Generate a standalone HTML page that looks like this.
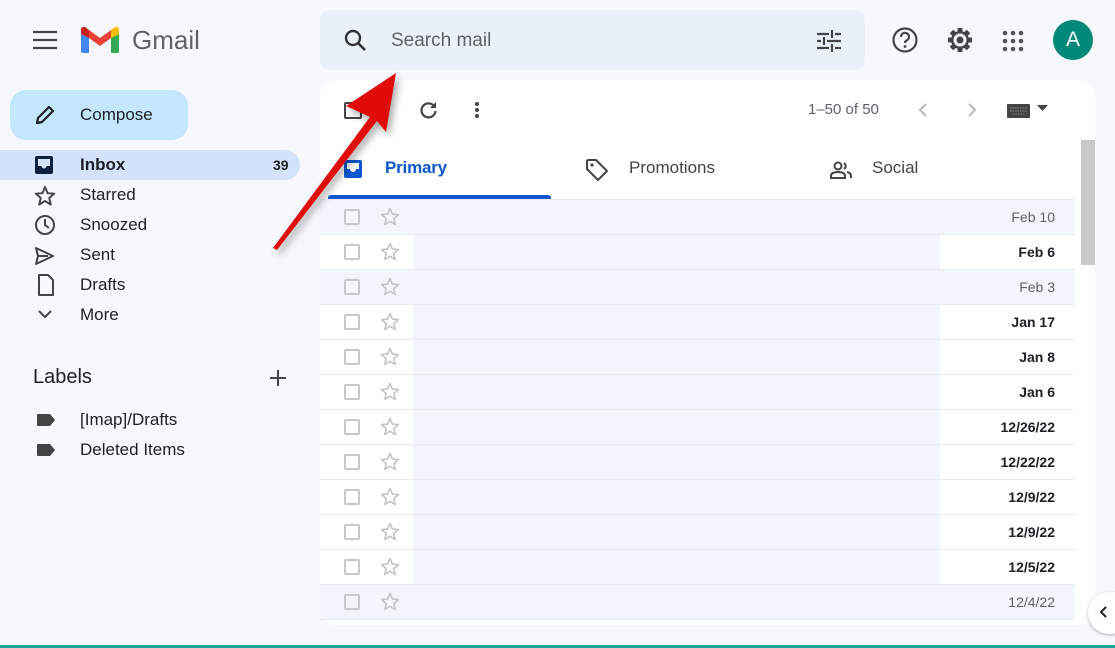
<!DOCTYPE html>
<html><head><meta charset="utf-8"><style>
*{margin:0;padding:0;box-sizing:border-box}
body{width:1115px;height:648px;background:#f6f8fc;font-family:"Liberation Sans",Arial,sans-serif;position:relative;overflow:hidden;color:#202124}
.a{position:absolute}
.nav{position:absolute;left:80px;font-size:17px;color:#202124}
.ic{position:absolute;left:34px}
.row{position:absolute;left:320px;width:755px;height:35px;border-bottom:1px solid #e8ebf0;background:#f2f6fc}
.row .l,.row .r{position:absolute;top:0;height:34px;background:#fff}
.row .l{left:0;width:93px}.row .r{left:620px;width:135px}
.row.rd .l,.row.rd .r{background:transparent}
.cb{position:absolute;left:24px;top:9px;width:16px;height:16px;border:2px solid #c8c8c8;border-radius:2px}
.st{position:absolute;left:60px;top:7px}
.dt{position:absolute;right:20px;top:9px;font-size:14px;font-weight:bold;color:#202124}
.rd .dt{font-weight:normal;color:#5f6368}
</style></head><body>
<svg class="a" style="left:33px;top:30px" width="24" height="20"><path d="M0 2h24M0 10h24M0 18h24" stroke="#444" stroke-width="2.2"/></svg>
<svg class="a" style="left:80px;top:26px" width="40" height="28" viewBox="0 0 40 28">
<path d="M1 8v17a2 2 0 0 0 2 2h6V12z" fill="#4285f4"/>
<path d="M31 27h6a2 2 0 0 0 2-2V8l-8 4z" fill="#34a853"/>
<path d="M31 12V4l4-3a3 3 0 0 1 4 3v4z" fill="#fbbc04"/>
<path d="M9 12V4l11 8 11-8v8l-11 8z" fill="#ea4335"/>
<path d="M1 8V4a3 3 0 0 1 4-3l4 3v8z" fill="#c5221f"/>
</svg>
<div class="a" style="left:132px;top:25px;font-size:26px;color:#5f6368">Gmail</div>
<div class="a" style="left:320px;top:10px;width:545px;height:60px;border-radius:10px;background:#eaf1fb"></div>
<svg class="a" style="left:343px;top:28px" width="26" height="26"><circle cx="10" cy="10" r="7" fill="none" stroke="#333" stroke-width="2.4"/><path d="M15 15l7 7" stroke="#333" stroke-width="2.6"/></svg>
<div class="a" style="left:391px;top:30px;font-size:19px;color:#5f6368">Search mail</div>
<svg class="a" style="left:816px;top:29px" width="26" height="24"><path d="M1 5h12M19 5h6M1 12h4M11 12h14M1 19h12M19 19h6M16 1v8M8 8v8M16 15v8" stroke="#444" stroke-width="2.2"/></svg>
<svg class="a" style="left:891px;top:26px" width="28" height="28"><circle cx="14" cy="14" r="11.5" fill="none" stroke="#444" stroke-width="2.2"/><path d="M10 11a4 4 0 1 1 5.5 3.5c-1 .6-1.5 1.2-1.5 2.5" fill="none" stroke="#444" stroke-width="2.2"/><circle cx="14" cy="20.5" r="1.4" fill="#444"/></svg>
<svg class="a" style="left:946px;top:26px" width="28" height="28" viewBox="0 0 28 28"><g fill="#444"><circle cx="14" cy="14" r="9"/><g stroke="#444" stroke-width="5"><path d="M14 2v24M2 14h24M5.5 5.5l17 17M22.5 5.5l-17 17"/></g></g><circle cx="14" cy="14" r="6.5" fill="#f6f8fc"/><circle cx="14" cy="14" r="3.5" fill="#444"/></svg>
<svg class="a" style="left:1002px;top:30px" width="22" height="22"><g fill="#555"><circle cx="3" cy="3" r="2.3"/><circle cx="11" cy="3" r="2.3"/><circle cx="19" cy="3" r="2.3"/><circle cx="3" cy="11" r="2.3"/><circle cx="11" cy="11" r="2.3"/><circle cx="19" cy="11" r="2.3"/><circle cx="3" cy="19" r="2.3"/><circle cx="11" cy="19" r="2.3"/><circle cx="19" cy="19" r="2.3"/></g></svg>
<div class="a" style="left:1053px;top:20px;width:40px;height:40px;border-radius:50%;background:#00897b;color:#fff;font-size:21px;text-align:center;line-height:40px">A</div>

<div class="a" style="left:10px;top:90px;width:178px;height:50px;border-radius:16px;background:#c2e7ff"></div>
<svg class="a" style="left:34px;top:104px" width="22" height="22"><path d="M3 19l1-5L15 3l4 4L8 18z" fill="none" stroke="#1f1f1f" stroke-width="2.2" stroke-linejoin="round"/></svg>
<div class="a" style="left:80px;top:105px;font-size:17px;color:#1f1f1f">Compose</div>
<div class="a" style="left:0;top:150px;width:300px;height:30px;border-radius:0 15px 15px 0;background:#d3e3fd"></div>
<svg class="ic" style="top:155px" width="20" height="20"><rect x="1" y="1" width="18" height="18" rx="2" fill="#0b1f3f"/><path d="M4 4h12v7h-3.5a2.5 2.5 0 0 1-5 0H4z" fill="#d3e3fd"/></svg>
<div class="nav" style="top:155px;font-weight:bold">Inbox</div>
<div class="a" style="left:273px;top:157px;font-size:14px;font-weight:bold">39</div>
<svg class="ic" style="top:185px" width="22" height="22"><path d="M11 2l2.6 6.2 6.6.5-5 4.3 1.6 6.5L11 16l-5.8 3.5 1.6-6.5-5-4.3 6.6-.5z" fill="none" stroke="#444" stroke-width="1.9" stroke-linejoin="round"/></svg>
<div class="nav" style="top:185px">Starred</div>
<svg class="ic" style="top:214px" width="22" height="22"><circle cx="11" cy="11" r="9" fill="none" stroke="#444" stroke-width="2"/><path d="M11 5v6l4 3" fill="none" stroke="#444" stroke-width="2"/></svg>
<div class="nav" style="top:215px">Snoozed</div>
<svg class="ic" style="top:246px" width="22" height="20"><path d="M2 2l17 8-17 8 2-8z M4 10h10" fill="none" stroke="#444" stroke-width="2" stroke-linejoin="round"/></svg>
<div class="nav" style="top:245px">Sent</div>
<svg class="ic" style="left:37px;top:274px" width="18" height="22"><path d="M2 1h9l5 5v15H2z" fill="none" stroke="#444" stroke-width="2" stroke-linejoin="round"/></svg>
<div class="nav" style="top:275px">Drafts</div>
<svg class="ic" style="left:37px;top:309px" width="16" height="12"><path d="M2 2l6 6 6-6" fill="none" stroke="#444" stroke-width="2"/></svg>
<div class="nav" style="top:305px">More</div>
<div class="a" style="left:33px;top:366px;font-size:20px;color:#202124">Labels</div>
<svg class="a" style="left:269px;top:369px" width="18" height="18"><path d="M9 1v16M1 9h16" stroke="#444" stroke-width="2"/></svg>
<svg class="a" style="left:36px;top:413px" width="20" height="14"><path d="M1 2q0-1 1-1h12l5 6-5 6H2q-1 0-1-1z" fill="#444"/></svg>
<div class="nav" style="top:410px">[Imap]/Drafts</div>
<svg class="a" style="left:36px;top:443px" width="20" height="14"><path d="M1 2q0-1 1-1h12l5 6-5 6H2q-1 0-1-1z" fill="#444"/></svg>
<div class="nav" style="top:440px">Deleted Items</div>

<div class="a" style="left:320px;top:80px;width:775px;height:545px;border-radius:16px;background:#fff"></div>
<div class="a" style="left:344px;top:102px;width:18px;height:17px;border:2px solid #444;border-radius:2px"></div>
<svg class="a" style="left:417px;top:99px" width="22" height="22"><path d="M17 7a7 7 0 1 0 1.5 5" fill="none" stroke="#444" stroke-width="2.2"/><path d="M19 3v6h-6z" fill="#444"/></svg>
<svg class="a" style="left:474px;top:101px" width="6" height="18"><circle cx="3" cy="3" r="2" fill="#444"/><circle cx="3" cy="9" r="2" fill="#444"/><circle cx="3" cy="15" r="2" fill="#444"/></svg>
<div class="a" style="left:808px;top:101px;font-size:15px;color:#5f6368">1–50 of 50</div>
<svg class="a" style="left:918px;top:102px" width="10" height="16"><path d="M8 2L2 8l6 6" fill="none" stroke="#bbb" stroke-width="2"/></svg>
<svg class="a" style="left:967px;top:102px" width="10" height="16"><path d="M2 2l6 6-6 6" fill="none" stroke="#bbb" stroke-width="2"/></svg>
<svg class="a" style="left:1007px;top:104px" width="24" height="15"><rect x="0" y="0" width="23" height="14" rx="1" fill="#444"/><path d="M3 4h17M3 7h17M6 10h11" stroke="#888" stroke-width="1" stroke-dasharray="1.5 1"/></svg>
<svg class="a" style="left:1037px;top:105px" width="12" height="7"><path d="M0 0h11L5.5 6z" fill="#444"/></svg>
<svg class="a" style="left:344px;top:160px" width="18" height="18"><rect x="0" y="0" width="18" height="18" rx="2" fill="#0b57d0"/><path d="M3 3h12v6h-3a3 3 0 0 1-6 0H3z" fill="#fff"/></svg>
<div class="a" style="left:385px;top:158px;font-size:17px;color:#0b57d0;font-weight:bold;letter-spacing:-.2px">Primary</div>
<div class="a" style="left:328px;top:195px;width:223px;height:4px;border-radius:3px 3px 0 0;background:#0b57d0"></div>
<svg class="a" style="left:585px;top:158px" width="24" height="24"><path d="M2 3v8l11 11 9-9L11 2H3z" fill="none" stroke="#444" stroke-width="2" stroke-linejoin="round"/><circle cx="7" cy="7" r="1.6" fill="#444"/></svg>
<div class="a" style="left:629px;top:158px;font-size:17px;color:#444">Promotions</div>
<svg class="a" style="left:830px;top:161px" width="22" height="18"><circle cx="8" cy="5" r="3.5" fill="none" stroke="#444" stroke-width="2"/><path d="M1 17v-2q0-4 7-4t7 4v2z" fill="none" stroke="#444" stroke-width="2"/><path d="M14 2a3.5 3.5 0 0 1 0 6M17 11q4 1 4 4v2" fill="none" stroke="#444" stroke-width="2"/></svg>
<div class="a" style="left:872px;top:158px;font-size:17px;color:#444">Social</div>
<div class="a" style="left:320px;top:199px;width:755px;height:1px;background:#e8ebf0"></div>
<div class="a" style="left:1081px;top:140px;width:14px;height:125px;background:#c8c8c8"></div>

<div class="row rd" style="top:200px"><div class="l"></div><div class="r"></div><div class="cb"></div><svg class="st" width="20" height="20"><path d="M10 1.5l2.4 5.6 6 .5-4.6 4 1.4 5.9L10 14.3l-5.2 3.2 1.4-5.9-4.6-4 6-.5z" fill="none" stroke="#c4c4c4" stroke-width="1.6" stroke-linejoin="round"/></svg><div class="dt">Feb 10</div></div>
<div class="row" style="top:235px"><div class="l"></div><div class="r"></div><div class="cb"></div><svg class="st" width="20" height="20"><path d="M10 1.5l2.4 5.6 6 .5-4.6 4 1.4 5.9L10 14.3l-5.2 3.2 1.4-5.9-4.6-4 6-.5z" fill="none" stroke="#c4c4c4" stroke-width="1.6" stroke-linejoin="round"/></svg><div class="dt">Feb 6</div></div>
<div class="row rd" style="top:270px"><div class="l"></div><div class="r"></div><div class="cb"></div><svg class="st" width="20" height="20"><path d="M10 1.5l2.4 5.6 6 .5-4.6 4 1.4 5.9L10 14.3l-5.2 3.2 1.4-5.9-4.6-4 6-.5z" fill="none" stroke="#c4c4c4" stroke-width="1.6" stroke-linejoin="round"/></svg><div class="dt">Feb 3</div></div>
<div class="row" style="top:305px"><div class="l"></div><div class="r"></div><div class="cb"></div><svg class="st" width="20" height="20"><path d="M10 1.5l2.4 5.6 6 .5-4.6 4 1.4 5.9L10 14.3l-5.2 3.2 1.4-5.9-4.6-4 6-.5z" fill="none" stroke="#c4c4c4" stroke-width="1.6" stroke-linejoin="round"/></svg><div class="dt">Jan 17</div></div>
<div class="row" style="top:340px"><div class="l"></div><div class="r"></div><div class="cb"></div><svg class="st" width="20" height="20"><path d="M10 1.5l2.4 5.6 6 .5-4.6 4 1.4 5.9L10 14.3l-5.2 3.2 1.4-5.9-4.6-4 6-.5z" fill="none" stroke="#c4c4c4" stroke-width="1.6" stroke-linejoin="round"/></svg><div class="dt">Jan 8</div></div>
<div class="row" style="top:375px"><div class="l"></div><div class="r"></div><div class="cb"></div><svg class="st" width="20" height="20"><path d="M10 1.5l2.4 5.6 6 .5-4.6 4 1.4 5.9L10 14.3l-5.2 3.2 1.4-5.9-4.6-4 6-.5z" fill="none" stroke="#c4c4c4" stroke-width="1.6" stroke-linejoin="round"/></svg><div class="dt">Jan 6</div></div>
<div class="row" style="top:410px"><div class="l"></div><div class="r"></div><div class="cb"></div><svg class="st" width="20" height="20"><path d="M10 1.5l2.4 5.6 6 .5-4.6 4 1.4 5.9L10 14.3l-5.2 3.2 1.4-5.9-4.6-4 6-.5z" fill="none" stroke="#c4c4c4" stroke-width="1.6" stroke-linejoin="round"/></svg><div class="dt">12/26/22</div></div>
<div class="row" style="top:445px"><div class="l"></div><div class="r"></div><div class="cb"></div><svg class="st" width="20" height="20"><path d="M10 1.5l2.4 5.6 6 .5-4.6 4 1.4 5.9L10 14.3l-5.2 3.2 1.4-5.9-4.6-4 6-.5z" fill="none" stroke="#c4c4c4" stroke-width="1.6" stroke-linejoin="round"/></svg><div class="dt">12/22/22</div></div>
<div class="row" style="top:480px"><div class="l"></div><div class="r"></div><div class="cb"></div><svg class="st" width="20" height="20"><path d="M10 1.5l2.4 5.6 6 .5-4.6 4 1.4 5.9L10 14.3l-5.2 3.2 1.4-5.9-4.6-4 6-.5z" fill="none" stroke="#c4c4c4" stroke-width="1.6" stroke-linejoin="round"/></svg><div class="dt">12/9/22</div></div>
<div class="row" style="top:515px"><div class="l"></div><div class="r"></div><div class="cb"></div><svg class="st" width="20" height="20"><path d="M10 1.5l2.4 5.6 6 .5-4.6 4 1.4 5.9L10 14.3l-5.2 3.2 1.4-5.9-4.6-4 6-.5z" fill="none" stroke="#c4c4c4" stroke-width="1.6" stroke-linejoin="round"/></svg><div class="dt">12/9/22</div></div>
<div class="row" style="top:550px"><div class="l"></div><div class="r"></div><div class="cb"></div><svg class="st" width="20" height="20"><path d="M10 1.5l2.4 5.6 6 .5-4.6 4 1.4 5.9L10 14.3l-5.2 3.2 1.4-5.9-4.6-4 6-.5z" fill="none" stroke="#c4c4c4" stroke-width="1.6" stroke-linejoin="round"/></svg><div class="dt">12/5/22</div></div>
<div class="row rd" style="top:585px"><div class="l"></div><div class="r"></div><div class="cb"></div><svg class="st" width="20" height="20"><path d="M10 1.5l2.4 5.6 6 .5-4.6 4 1.4 5.9L10 14.3l-5.2 3.2 1.4-5.9-4.6-4 6-.5z" fill="none" stroke="#c4c4c4" stroke-width="1.6" stroke-linejoin="round"/></svg><div class="dt">12/4/22</div></div>

<div class="a" style="left:1088px;top:592px;width:44px;height:42px;border-radius:21px;background:#fff;box-shadow:0 1px 3px rgba(0,0,0,.3)"></div>
<svg class="a" style="left:1099px;top:605px" width="10" height="14"><path d="M7 2L2 7l5 5" fill="none" stroke="#222" stroke-width="2"/></svg>
<div class="a" style="left:0;top:645px;width:1115px;height:3px;background:#1aa39a"></div>

<svg class="a" style="left:0;top:0;filter:drop-shadow(3px 4px 4px rgba(0,0,0,.35))" width="1115" height="648"><polygon points="273,248 370,117 346,106 396,73 386,132 377,121 277,250" fill="#e00b0b"/></svg>
</body></html>
